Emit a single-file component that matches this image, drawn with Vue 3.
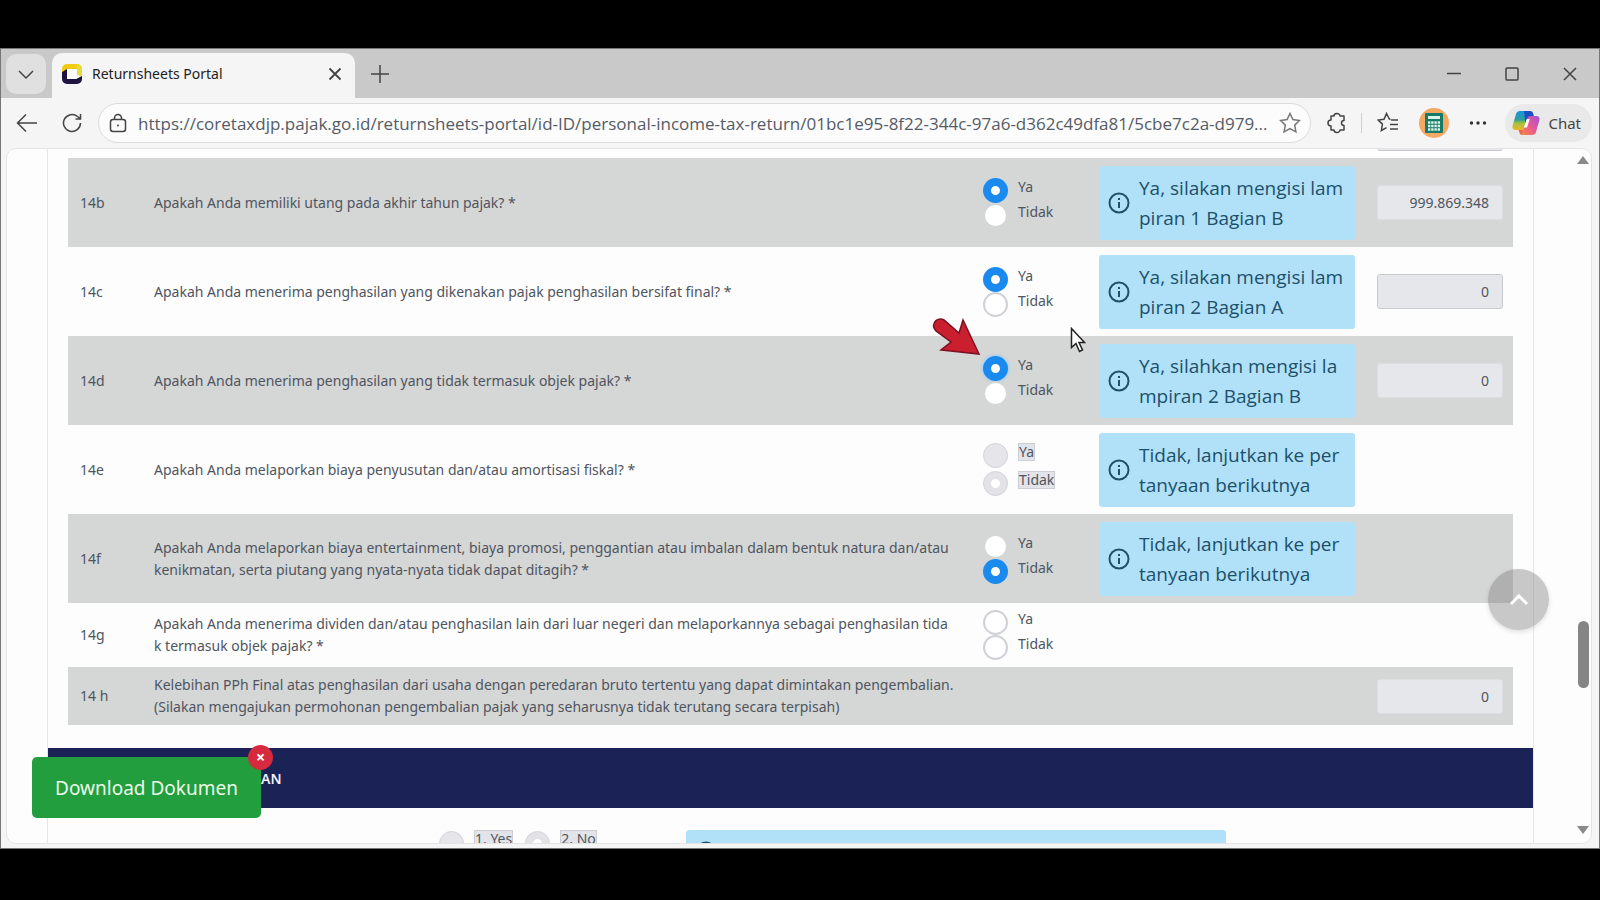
<template>
  <div class="window">
    <header class="titlebar">
      <button class="tab-menu" type="button" aria-label="Daftar tab">
        <svg width="18" height="18" viewBox="0 0 18 18"><path d="M2 6l7 7 7-7" /></svg>
      </button>
      <div class="tab">
        <svg class="favicon" width="22" height="22" viewBox="0 0 22 22">
          <path d="M6 1h10a5 5 0 0 1 5 5v8l-5-3V6H7L1 10V6a5 5 0 0 1 5-5z" fill="#f2cb13" />
          <path d="M16 1a5 5 0 0 1 5 5v8l-5-3V6z" fill="#e6dc3c" />
          <path d="M1 9l5-3v10h9l6-3v3a5 5 0 0 1-5 5H6a5 5 0 0 1-5-5z" fill="#1d1440" />
          <rect x="6" y="6" width="10" height="10" rx="1" fill="#fff" />
        </svg>
        <span class="tab-title">Returnsheets Portal</span>
        <button class="plain" type="button" aria-label="Tutup tab">
          <svg width="14" height="14" viewBox="0 0 14 14"><path d="M1.500 1.500l11 11M12.500 1.500l-11 11" stroke-width="1.800" /></svg>
        </button>
      </div>
      <button class="plain new-tab" type="button" aria-label="Tab baru">
        <svg width="20" height="20" viewBox="0 0 20 20"><path d="M10 1v18M1 10h18" /></svg>
      </button>
      <div class="window-controls">
        <button class="plain" type="button" aria-label="Minimalkan">
          <svg width="14" height="14" viewBox="0 0 14 14"><path d="M0 6.500h14" /></svg>
        </button>
        <button class="plain" type="button" aria-label="Maksimalkan">
          <svg width="14" height="14" viewBox="0 0 14 14"><rect x="1" y="1" width="12" height="12" rx="1" /></svg>
        </button>
        <button class="plain" type="button" aria-label="Tutup">
          <svg width="14" height="14" viewBox="0 0 14 14"><path d="M1 1l12 12M13 1L1 13" /></svg>
        </button>
      </div>
    </header>

    <div class="toolbar">
      <button class="plain" type="button" aria-label="Kembali">
        <svg width="22" height="20" viewBox="0 0 22 20"><path d="M21 10H2M10 1.500L1.500 10l8.500 8.500" /></svg>
      </button>
      <button class="plain" type="button" aria-label="Muat ulang">
        <svg width="20" height="20" viewBox="0 0 20 20"><path d="M18.500 10a8.500 8.500 0 1 1-3-6.500l2.500 2M18.500 1v5h-5" /></svg>
      </button>
      <div class="address">
        <svg width="18" height="20" viewBox="0 0 18 20">
          <rect x="1.500" y="6.500" width="15" height="12" rx="2.500" />
          <path d="M5.500 6.500V5a3.500 3.500 0 0 1 7 0v1.500" />
          <circle cx="9" cy="12.500" r="1" fill="#444" stroke="none" />
        </svg>
        <input v-model="url" type="text" aria-label="Alamat" />
        <svg class="star" width="22" height="22" viewBox="0 0 22 22"><path d="M11 1.500l2.900 6.100 6.600.9-4.800 4.600 1.200 6.700-5.900-3.200-5.900 3.200 1.200-6.700L1.500 8.500l6.600-.9z" /></svg>
      </div>
      <div class="tools">
        <button class="plain" type="button" aria-label="Ekstensi">
          <svg width="22" height="22" viewBox="0 0 22 22"><path d="M5 4h3a3 2.500 0 0 1 6 0h4v4.500a2.500 2.500 0 0 0 0 5V18h-4a3 2.500 0 0 1-6 0H5v-4a3 3 0 0 1 0-6z" stroke-linejoin="round" /></svg>
        </button>
        <i class="divider"></i>
        <button class="plain" type="button" aria-label="Favorit">
          <svg width="22" height="22" viewBox="0 0 22 22"><path d="M13.500 7.500L12.300 7 9.500 1.500 7 7.200l-5.800.8 4.200 4.100-1 6.400 5.100-2.900M14 8h7M13 12.500h8M13 17h8" /></svg>
        </button>
        <button class="plain" type="button" aria-label="Profil">
          <svg width="30" height="30" viewBox="0 0 30 30">
            <circle cx="15" cy="15" r="15" fill="#f4a862" stroke="none" />
            <rect x="6" y="5" width="18" height="20" rx="1" fill="#17796a" stroke="none" />
            <rect x="9" y="8" width="12" height="3" fill="#d9f3e8" stroke="none" />
            <path d="M9 14.500h12M9 18h12M9 21.500h12" stroke="#d9f3e8" stroke-width="2.500" stroke-dasharray="2.400 0.800" />
          </svg>
        </button>
        <button class="plain" type="button" aria-label="Menu lainnya">
          <svg width="18" height="6" viewBox="0 0 18 6"><g fill="#333" stroke="none"><circle cx="2.500" cy="3" r="1.700" /><circle cx="9" cy="3" r="1.700" /><circle cx="15.500" cy="3" r="1.700" /></g></svg>
        </button>
      </div>
      <button class="chat" type="button">
        <svg width="28" height="26" viewBox="0 0 28 26">
          <defs>
            <linearGradient id="cool" x1="0" y1="0" x2="0" y2="1">
              <stop offset="0" stop-color="#1794e0" /><stop offset="0.450" stop-color="#2f9e9a" /><stop offset="0.650" stop-color="#a6c23a" /><stop offset="1" stop-color="#f0b429" />
            </linearGradient>
            <linearGradient id="warm" x1="1" y1="0" x2="0" y2="1">
              <stop offset="0" stop-color="#a24fd8" /><stop offset="0.550" stop-color="#ea5b93" /><stop offset="1" stop-color="#f58a3c" />
            </linearGradient>
          </defs>
          <path d="M8 1h10l-5 16c-.7 2-1.500 3-4 3H3.500C1 20 0 18 .7 15.500L4 4c.6-2 2-3 4-3z" fill="url(#cool)" stroke="none" />
          <path d="M12 1h6c2 0 2.800 1 3.300 3l1 3.500H18c-2 0-3 .8-3.600 3l-1 3.500z" fill="#1b50c4" stroke="none" />
          <path d="M20 25H10l5-16c.7-2 1.500-3 4-3h5.500c2.500 0 3.500 2 2.800 4.500L24 22c-.6 2-2 3-4 3z" fill="url(#warm)" stroke="none" />
          <path d="M10 25c-1.500 0-2.300-1-2.800-3l-.6-2H9c2.500 0 3.300-1 4-3l1-3z" fill="#ee6a4a" stroke="none" />
          <path d="M14.800 9h3l-2.800 8.500h-3.200z" fill="#fff" stroke="none" />
        </svg>
        Chat
      </button>
    </div>

    <div class="viewport">
      <main class="card">
        <div class="prev-row"><input type="text" disabled aria-label="14a" /></div>
        <table class="questions">
          <colgroup>
            <col class="col-no" />
            <col />
            <col class="col-choice" />
            <col class="col-notice" />
            <col class="col-amount" />
          </colgroup>
          <tbody>
            <tr v-for="row in rows" :key="row.no" :class="{ tall: row.notice }">
              <td>{{ row.no }}</td>
              <td class="question">{{ row.question }}</td>
              <td>
                <div v-if="row.choice !== undefined" class="choices">
                  <label v-for="option in options" :key="option" class="choice" :class="{ disabled: row.disabled }">
                    <input
                      v-model="row.choice"
                      type="radio"
                      :name="row.no"
                      :value="option"
                      :disabled="row.disabled"
                      :class="{ focused: row.no === '14d' && option === 'Ya' }"
                    />
                    <span>{{ option }}</span>
                  </label>
                </div>
              </td>
              <td>
                <div v-if="row.notice" class="notice">
                  <svg width="22" height="22" viewBox="0 0 22 22">
                    <circle cx="11" cy="11" r="9.500" />
                    <path d="M11 10v6M11 6v2" />
                  </svg>
                  <span>{{ row.notice }}</span>
                </div>
              </td>
              <td><input v-if="row.amount" v-model="row.amount" class="amount" type="text" disabled :aria-label="'Nilai ' + row.no" /></td>
            </tr>
          </tbody>
        </table>
        <h2 class="section">AN</h2>
        <div class="next-row">
          <div class="next-choices">
            <label class="choice disabled"><input type="radio" name="next" disabled /><span>1. Yes</span></label>
            <label class="choice disabled"><input type="radio" name="next" disabled checked /><span>2. No</span></label>
          </div>
          <div class="notice next-notice">
            <svg width="22" height="22" viewBox="0 0 22 22"><circle cx="11" cy="11" r="9.500" /></svg>
          </div>
        </div>
      </main>

      <div class="scrollbar">
        <svg width="12" height="8" viewBox="0 0 12 8"><path d="M6 0l6 8H0z" /></svg>
        <i class="thumb"></i>
        <svg width="12" height="8" viewBox="0 0 12 8"><path d="M6 8l6-8H0z" /></svg>
      </div>

      <button class="to-top" type="button" aria-label="Ke atas">
        <svg width="20" height="12" viewBox="0 0 20 12"><path d="M2 10l8-8 8 8" /></svg>
      </button>

      <div class="download">
        <button class="download-btn" type="button">Download Dokumen</button>
        <button class="dismiss" type="button" aria-label="Tutup">×</button>
      </div>

      <svg class="pointer-arrow" width="50" height="40" viewBox="0 0 50 40">
        <path d="M2 10C0 4 6-1 12 2l15 13 4-13 16 34-38-4 10-8L4 13z" />
      </svg>
      <svg class="cursor" width="16" height="26" viewBox="0 0 16 26">
        <path d="M1.500 1.500v19l4.500-4 3.500 8 3-1.500-3.500-7.500h5.500z" />
      </svg>
    </div>
  </div>
</template>

<script setup>
import { ref } from 'vue';

const url = ref('https://coretaxdjp.pajak.go.id/returnsheets-portal/id-ID/personal-income-tax-return/01bc1e95-8f22-344c-97a6-d362c49dfa81/5cbe7c2a-d979...');

const options = ['Ya', 'Tidak'];

const rows = ref([
  {
    no: '14b',
    question: 'Apakah Anda memiliki utang pada akhir tahun pajak? *',
    choice: 'Ya',
    notice: 'Ya, silakan mengisi lam\npiran 1 Bagian B',
    amount: '999.869.348',
  },
  {
    no: '14c',
    question: 'Apakah Anda menerima penghasilan yang dikenakan pajak penghasilan bersifat final? *',
    choice: 'Ya',
    notice: 'Ya, silakan mengisi lam\npiran 2 Bagian A',
    amount: '0',
  },
  {
    no: '14d',
    question: 'Apakah Anda menerima penghasilan yang tidak termasuk objek pajak? *',
    choice: 'Ya',
    notice: 'Ya, silahkan mengisi la\nmpiran 2 Bagian B',
    amount: '0',
  },
  {
    no: '14e',
    question: 'Apakah Anda melaporkan biaya penyusutan dan/atau amortisasi fiskal? *',
    choice: 'Tidak',
    disabled: true,
    notice: 'Tidak, lanjutkan ke per\ntanyaan berikutnya',
  },
  {
    no: '14f',
    question: 'Apakah Anda melaporkan biaya entertainment, biaya promosi, penggantian atau imbalan dalam bentuk natura dan/atau\nkenikmatan, serta piutang yang nyata-nyata tidak dapat ditagih? *',
    choice: 'Tidak',
    notice: 'Tidak, lanjutkan ke per\ntanyaan berikutnya',
  },
  {
    no: '14g',
    question: 'Apakah Anda menerima dividen dan/atau penghasilan lain dari luar negeri dan melaporkannya sebagai penghasilan tida\nk termasuk objek pajak? *',
    choice: '',
  },
  {
    no: '14 h',
    question: 'Kelebihan PPh Final atas penghasilan dari usaha dengan peredaran bruto tertentu yang dapat dimintakan pengembalian.\n(Silakan mengajukan permohonan pengembalian pajak yang seharusnya tidak terutang secara terpisah)',
    amount: '0',
  },
]);
</script>

<style>
body {
  background: #000;
}
</style>

<style scoped>
* {
  box-sizing: border-box;
}

.window {
  display: flex;
  flex-direction: column;
  height: calc(100vh - 99px);
  margin: 48px 0 51px;
  border: 1px solid #777;
  background: #f5f5f5;
  color: #4f5560;
  font-family: "Noto Sans", "Open Sans", sans-serif;
  font-size: 14px;
}

svg {
  flex: none;
  fill: none;
  stroke: #444;
  stroke-width: 1.5;
}

button,
input {
  font: inherit;
  color: inherit;
}

.plain {
  display: flex;
  align-items: center;
  justify-content: center;
  padding: 0;
  border: 0;
  background: none;
}

/* 标题栏 */
.titlebar {
  display: flex;
  align-items: center;
  flex: none;
  height: 49px;
  padding-left: 5px;
  background: #c9c9c9;
}

.tab-menu {
  display: flex;
  align-items: center;
  justify-content: center;
  width: 40px;
  height: 40px;
  padding: 0;
  border: 0;
  border-radius: 10px;
  background: #e0e0e0;
}

.tab {
  display: flex;
  align-items: center;
  align-self: flex-end;
  width: 303px;
  height: 45px;
  margin-left: 6px;
  padding: 0 13px 4px 9px;
  border-radius: 10px 10px 0 0;
  background: #f5f5f5;
}

.favicon {
  stroke: none;
}

.tab-title {
  flex: 1;
  margin-left: 9px;
  color: #222;
}

.new-tab {
  margin-left: 15px;
}

.window-controls {
  display: flex;
  gap: 44px;
  margin-left: auto;
  padding-right: 22px;
}

/* 工具栏 */
.toolbar {
  display: flex;
  align-items: center;
  flex: none;
  height: 50px;
  padding: 0 7px 0 15px;
}

.toolbar > .plain + .plain {
  margin-left: 24px;
}

.address {
  display: flex;
  align-items: center;
  flex: 1;
  height: 40px;
  margin-left: 16px;
  padding: 0 9px 0 10px;
  border: 1px solid #dcdcdc;
  border-radius: 20px;
  background: #fcfcfc;
}

.address input {
  flex: 1;
  min-width: 0;
  margin: 0 4px 0 11px;
  padding: 0;
  border: 0;
  outline: 0;
  background: none;
  color: #555b66;
  font-family: "Open Sans", "Noto Sans", sans-serif;
  font-size: 17px;
}

.star {
  stroke: #777;
}

.tools {
  display: flex;
  align-items: center;
  margin-left: 15px;
}

.divider {
  width: 1px;
  height: 20px;
  margin: 0 15px 0 13px;
  background: #d0d0d0;
}

.tools .divider ~ .plain + .plain {
  margin-left: 20px;
}

.tools .plain:last-child {
  margin-left: 22px;
}

.chat {
  display: flex;
  align-items: center;
  gap: 8px;
  height: 38px;
  margin-left: 18px;
  padding: 0 11px 0 7px;
  border: 0;
  border-radius: 19px;
  background: #e9e9e9;
  color: #444;
  font-size: 15px;
}

/* 页面内容 */
.viewport {
  position: relative;
  display: flex;
  flex: 1;
  min-height: 0;
  margin: 0 7px 4px 5px;
  border: 1px solid #e4e4e4;
  border-radius: 10px;
  background: #fdfdfd;
  overflow: hidden;
}

.card {
  flex: 1;
  min-width: 0;
  margin-left: 40px;
  border: solid #e5e5ea;
  border-width: 0 1px;
}

.prev-row {
  display: flex;
  align-items: flex-end;
  justify-content: flex-end;
  height: 9px;
  padding: 0 30px 7px;
  overflow: hidden;
}

.prev-row input {
  width: 126px;
}

.questions {
  width: calc(100% - 40px);
  margin: 0 20px;
  border-collapse: collapse;
  table-layout: fixed;
}

.col-no {
  width: 74px;
}

.col-choice {
  width: 116px;
}

.col-notice {
  width: 280px;
}

.col-amount {
  width: 146px;
}

.questions tr.tall {
  height: 89px;
}

.questions tr:nth-child(odd) {
  background: #d5d6d6;
}

.questions td {
  padding: 7px 0 7px 12px;
  line-height: 22px;
}

.questions td:nth-child(n + 4) {
  padding: 7px 12px;
}

.questions td:last-child {
  padding: 7px 10px;
}

.question {
  white-space: pre;
}

.choices {
  display: flex;
  flex-direction: column;
}

.choice {
  display: flex;
  align-items: flex-start;
  gap: 10px;
}

.choice span {
  height: 18px;
  line-height: 18px;
}

.choice input {
  appearance: none;
  flex: none;
  width: 25px;
  height: 25px;
  margin: 0;
  border: 2px solid #cfd1d6;
  border-radius: 50%;
  background: #fff;
}

tr:nth-child(odd) .choice input {
  border-color: #d5d6d6;
}

.choice input:checked,
tr:nth-child(odd) .choice input:checked {
  border: 8px solid #1b8aee;
}

.choice input.focused {
  box-shadow: 0 0 3px 1px #9bd0f8;
}

.choices .disabled + .disabled {
  margin-top: 3px;
}

.choice.disabled input {
  border: 1px solid #d3d3d8;
  background: #e6e6ea;
}

.choice.disabled input:checked {
  background: radial-gradient(circle, #fff 4px, #e3e3e7 5px);
}

.choice.disabled span {
  border: 1px solid #cdced3;
  background: #e3e4e9;
  line-height: 16px;
}

.notice {
  display: flex;
  align-items: center;
  gap: 9px;
  height: 74px;
  padding-left: 9px;
  border-radius: 3px;
  background: #b1e1f8;
  color: #1c506b;
  font-family: "Open Sans", "Noto Sans", sans-serif;
  font-size: 19px;
  line-height: 30px;
  white-space: pre;
}

.notice svg {
  stroke: #1c506b;
  stroke-width: 2;
}

.amount,
.prev-row input {
  display: block;
  height: 35px;
  border: 1px solid #c9cad0;
  border-radius: 3px;
  background: #e6e7eb;
}

.amount {
  width: 100%;
  padding: 0 13px;
  color: #50555f;
  text-align: right;
}

tr:nth-child(odd) .amount {
  border-color: #dcdde0;
}

.section {
  height: 60px;
  margin: 23px 0 0;
  padding-left: 213px;
  background: #1b2255;
  color: #f0f0f5;
  font-size: 14px;
  font-weight: 600;
  line-height: 62px;
}

.next-row {
  display: flex;
  padding: 22px 307px 0 391px;
}

.next-choices {
  display: flex;
  gap: 12px;
  width: 247px;
}

.next-choices input {
  margin-top: 1px;
}

.next-notice {
  flex: 1;
  align-items: flex-start;
  padding-top: 11px;
}

.scrollbar {
  display: flex;
  flex-direction: column;
  align-items: center;
  flex: none;
  width: 16px;
  margin-left: 41px;
  padding: 7px 0 9px;
}

.scrollbar path {
  fill: #8a8a8a;
  stroke: none;
}

.thumb {
  width: 11px;
  height: 67px;
  margin: 457px 0 auto;
  border-radius: 6px;
  background: #858585;
}

/* 悬浮元素 */
.to-top {
  position: absolute;
  right: 42px;
  top: 420px;
  display: flex;
  align-items: center;
  justify-content: center;
  width: 61px;
  height: 61px;
  padding: 0;
  border: 0;
  border-radius: 50%;
  background: rgba(120, 120, 120, 0.4);
  box-shadow: 0 2px 5px rgba(0, 0, 0, 0.12);
}

.to-top path {
  stroke: #fff;
  stroke-width: 3;
}

.download {
  position: absolute;
  left: 25px;
  bottom: 25px;
}

.download-btn {
  height: 61px;
  width: 229px;
  padding: 0;
  border: 0;
  border-radius: 5px;
  background: #239e3e;
  color: #eafaea;
  font-size: 19px;
}

.dismiss {
  position: absolute;
  top: -12px;
  right: -12px;
  width: 25px;
  height: 25px;
  padding: 0;
  border: 0;
  border-radius: 50%;
  background: #d62b3f;
  color: #fff;
  font-size: 16px;
  font-weight: 700;
  line-height: 25px;
}

.pointer-arrow {
  position: absolute;
  left: 925px;
  top: 169px;
}

.pointer-arrow path {
  fill: #c91f2f;
  stroke: #7c1020;
}

.cursor {
  position: absolute;
  left: 1063px;
  top: 178px;
}

.cursor path {
  fill: #fff;
  stroke: #222;
}
</style>
